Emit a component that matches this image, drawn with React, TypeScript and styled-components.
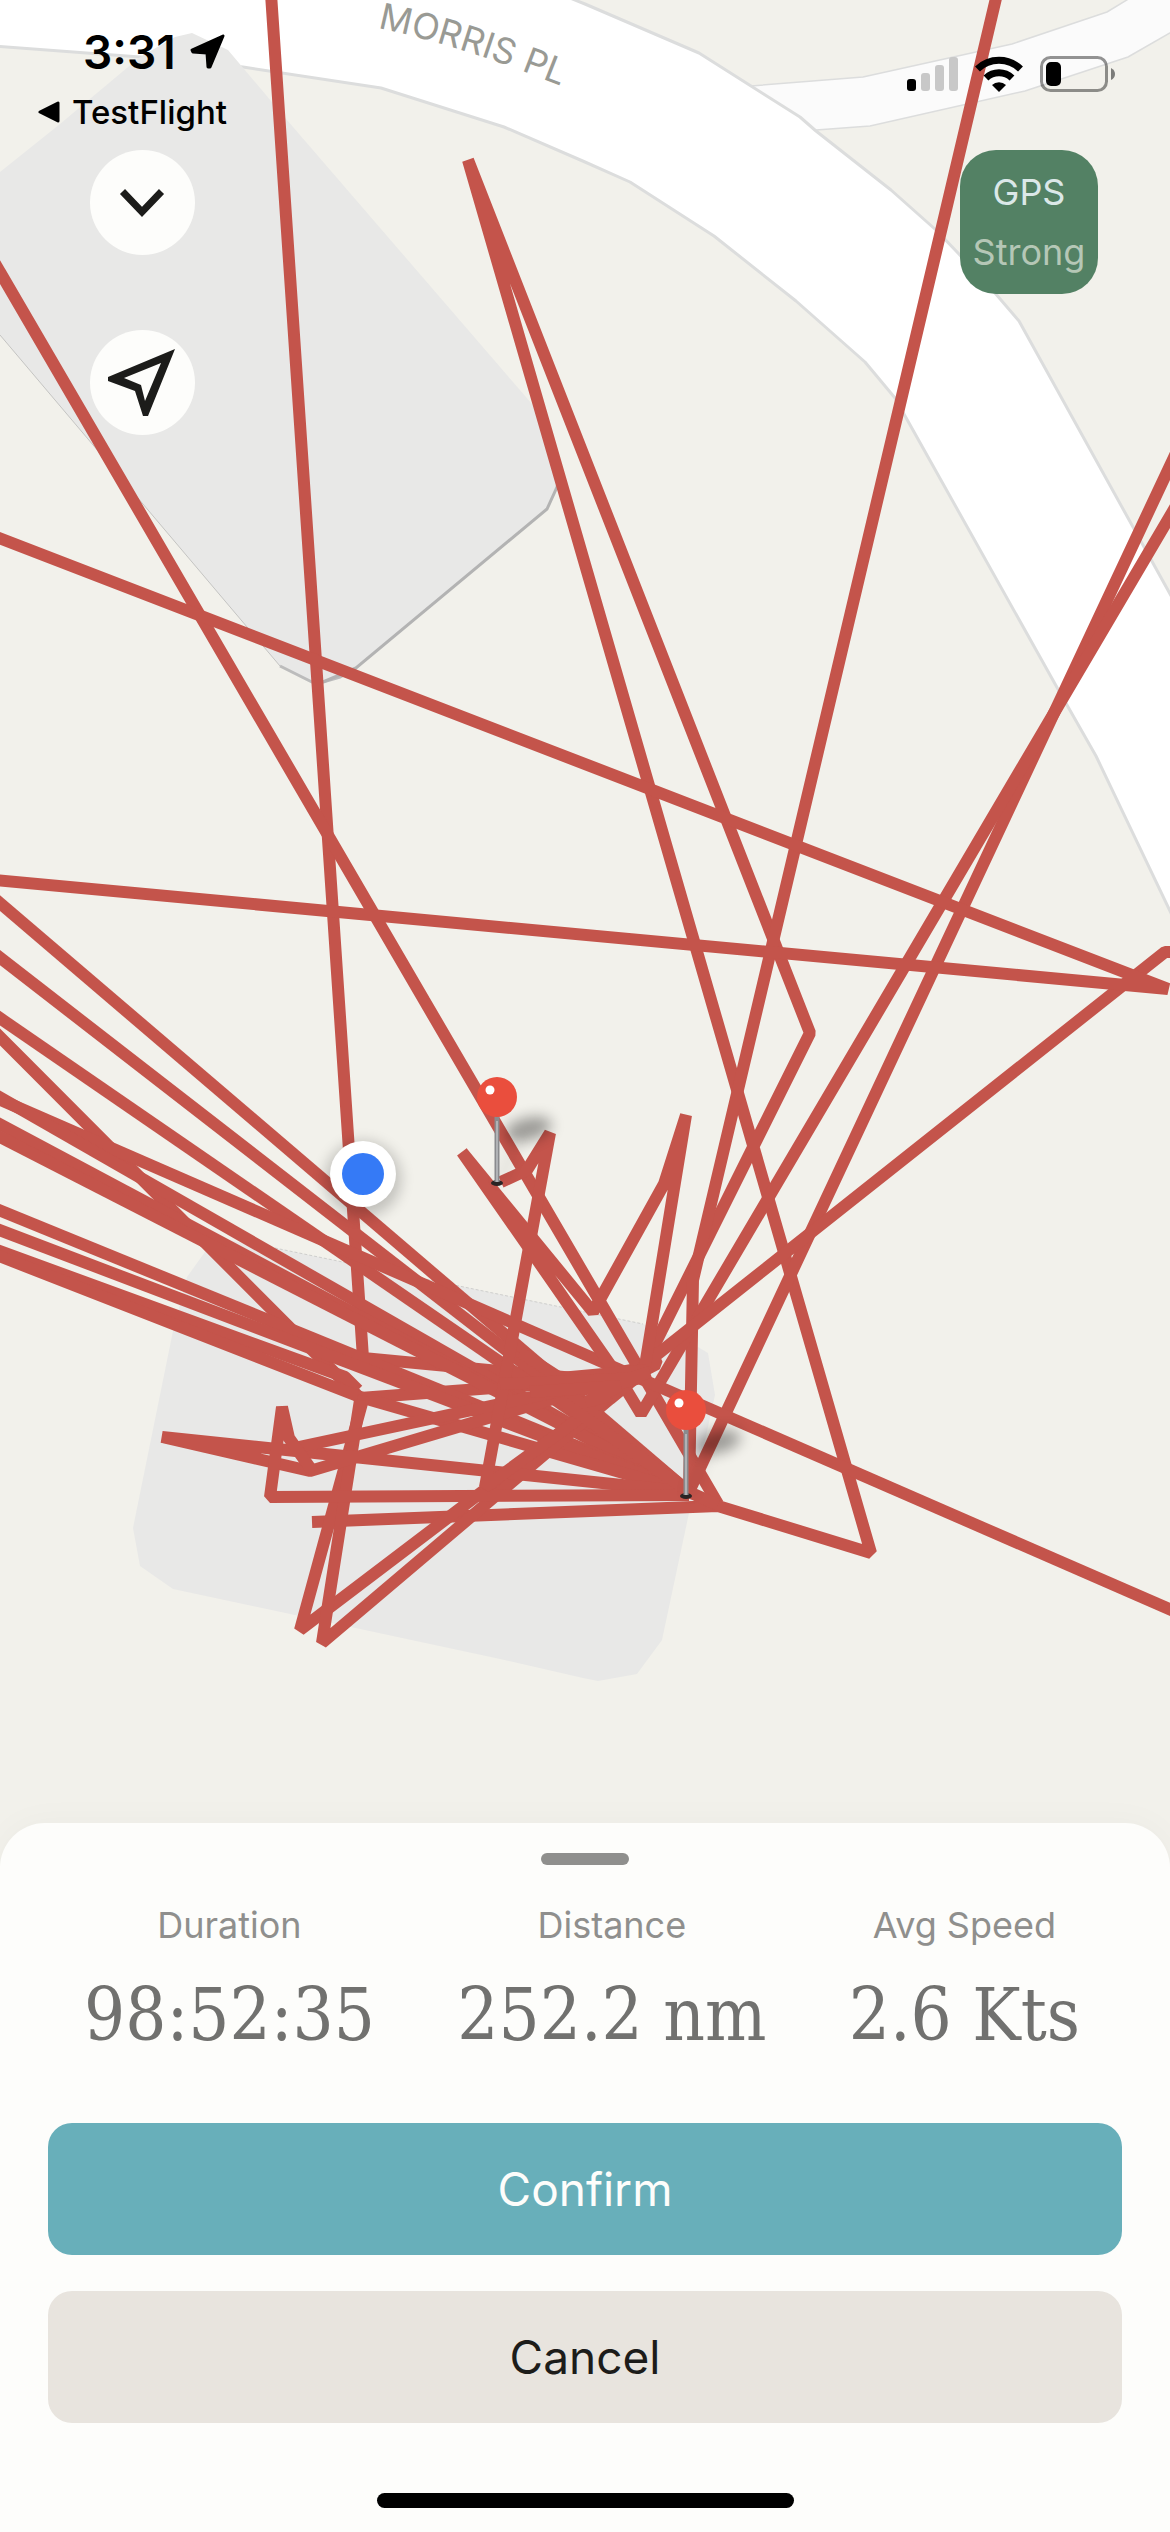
import React from 'react';
import styled, { createGlobalStyle } from 'styled-components';

const sans = "Inter, 'Noto Sans', 'Liberation Sans', sans-serif";
const serif = "'DejaVu Serif Condensed', 'DejaVu Serif', 'Liberation Serif', serif";

const GlobalStyle = createGlobalStyle`
  *, *::before, *::after { box-sizing: border-box; }
  body { margin: 0; background: #fdfdfb; font-family: ${sans}; }
  button { border: 0; padding: 0; font: inherit; cursor: pointer; }
`;

const Screen = styled.main`
  display: flex;
  flex-direction: column;
  min-height: 100vh;
`;

const MapArea = styled.section`
  position: relative;
  flex: 1;
  min-height: 600px;
  overflow: hidden;
  background: #f2f1eb;
`;

const MapCanvas = styled.svg`
  position: absolute;
  inset: 0;
  width: 100%;
  height: 100%;
`;

const Overlay = styled.div`
  position: relative;
`;

const StatusBar = styled.header`
  display: flex;
  justify-content: space-between;
  height: 150px;
  padding: 22px 55px 0 38px;
  color: #000;
`;

const StatusLeft = styled.div`
  display: flex;
  flex-direction: column;
  align-items: flex-start;
  gap: 12px;
`;

const Clock = styled.div`
  display: flex;
  align-items: center;
  gap: 14px;
  padding-left: 45px;
  font-size: 46px;
  font-weight: 600;
  line-height: 60px;
`;

const BackLink = styled.button`
  display: flex;
  align-items: center;
  gap: 11px;
  background: none;
  color: #000;
  font-size: 33px;
  font-weight: 500;
  line-height: 36px;
`;

const StatusIcons = styled.div`
  display: flex;
  align-items: center;
  gap: 17px;
  height: 104px;
`;

const Controls = styled.div`
  display: flex;
  justify-content: space-between;
  align-items: flex-start;
  padding: 0 72px 0 90px;
`;

const ControlStack = styled.div`
  display: flex;
  flex-direction: column;
  gap: 75px;
`;

const RoundButton = styled.button`
  display: block;
  width: 105px;
  height: 105px;
  border-radius: 50%;
  background: #fdfdfb;
  color: #1c1c1a;

  svg { display: block; }
`;

const GpsBadge = styled.div`
  display: flex;
  flex-direction: column;
  align-items: center;
  min-width: 138px;
  padding: 12px;
  border-radius: 36px;
  background: #538164;
`;

const BadgeLine = styled.span<{ $tone: string }>`
  color: ${(p) => p.$tone};
  font-size: 36px;
  line-height: 60px;
`;

const Sheet = styled.section`
  position: relative;
  display: flex;
  flex-direction: column;
  align-items: center;
  margin-top: -45px;
  padding: 30px 48px 24px;
  border-radius: 45px 45px 0 0;
  background: #fdfdfb;
  box-shadow: 0 0 36px rgba(0, 0, 0, 0.03);
`;

const Handle = styled.div`
  width: 88px;
  height: 12px;
  border-radius: 6px;
  background: #8f8f8d;
`;

const Stats = styled.dl`
  display: flex;
  align-self: stretch;
  justify-content: space-between;
  margin: 36px 0 60px;
  padding: 0 42px 0 36px;
`;

const Stat = styled.div`
  display: flex;
  flex-direction: column;
  align-items: center;
  gap: 18px;
`;

const StatLabel = styled.dt`
  color: #8f8f8d;
  font-size: 36px;
  line-height: 48px;
`;

const StatValue = styled.dd`
  margin: 0;
  color: #71716f;
  font-family: ${serif};
  font-stretch: condensed;
  font-size: 72px;
  line-height: 96px;
  white-space: nowrap;
`;

const Actions = styled.div`
  display: flex;
  flex-direction: column;
  align-self: stretch;
  gap: 36px;
`;

const ActionButton = styled.button<{ $primary?: boolean }>`
  height: 132px;
  border-radius: 24px;
  background: ${(p) => (p.$primary ? '#68afba' : '#e8e4de')};
  color: ${(p) => (p.$primary ? '#fdfdfb' : '#1c1c1a')};
  font-size: 46px;
  line-height: 60px;
`;

const HomeIndicator = styled.div`
  width: 417px;
  height: 15px;
  margin-top: 70px;
  border-radius: 8px;
  background: #000;
`;

const tracks = [
  'M271 -6L363 1358L585 1379L642 1368',
  'M-6 262L0 272L424 1000L718 1504',
  'M642 1370L810 1033L468 160L871 1553L718 1506L312 1522',
  'M997 -6L693 1280L689 1492',
  'M1176 453L700 1468L689 1492',
  'M1176 506L641 1414L618 1376',
  'M1176 952H1165L654 1357L657 1364L630 1378',
  'M-6 536L1168 989L-6 880',
  'M-6 898L689 1492',
  'M-6 953L689 1492',
  'M-6 1014L689 1492',
  'M-6 1031L360 1398L493 1388L630 1378',
  'M-6 1097L1176 1612',
  'M-6 1094L689 1492',
  'M-6 1121L689 1492',
  'M-6 1134L689 1490',
  'M-6 1208L689 1492',
  'M-6 1228L689 1492',
  'M-6 1249L345 1377L358 1390',
  'M-6 1254L360 1397L689 1492',
  'M364 1396L300 1630L640 1372',
  'M360 1400L322 1643L610 1399L650 1366',
  'M689 1492L162 1437L310 1471L640 1373',
  'M640 1374L294 1448',
  'M689 1495L270 1497L282 1407L289 1438L313 1472',
  'M501 1182L527 1170L550 1133L485 1487L610 1396',
  'M618 1376L462 1152L593 1312L664 1184L686 1115L645 1366',
  'M520 1352L560 1378L648 1370L560 1386L689 1492',
  'M500 1384L640 1378L590 1392L650 1372',
  'M530 1392L620 1386L586 1402L610 1396',
  'M560 1400L689 1492L718 1505',
];

const Pin = ({ x, y }: { x: number; y: number }) => (
  <g transform={`translate(${x} ${y})`}>
    <ellipse cx="31" cy="-54" rx="24" ry="11" transform="rotate(-14 31 -54)" fill="#000" opacity="0.36" filter="url(#soft)" />
    <path d="M2 0L22 -46" stroke="#000" strokeWidth="8" opacity="0.08" filter="url(#soft)" />
    <ellipse cy="0" rx="6" ry="3" fill="#2a2424" />
    <path d="M0 -68V-1" stroke="#8a8b8e" strokeWidth="5" />
    <path d="M0 -62V-1" stroke="#b0b2b5" strokeWidth="2" />
    <circle cy="-86" r="20" fill="#ea4e3d" />
    <circle cx="-7" cy="-93" r="4.5" fill="#fff" />
  </g>
);

const RouteMap = () => (
  <MapCanvas viewBox="0 0 1170 1868" preserveAspectRatio="xMidYMin slice" role="img" aria-label="Recorded track">
    <defs>
      <filter id="soft" x="-60%" y="-100%" width="220%" height="300%">
        <feGaussianBlur stdDeviation="7" />
      </filter>
      <path id="street" d="M378 28Q470 47 590 98" />
    </defs>
    <g stroke="#dcdddd" strokeLinejoin="round">
      <path
        d="M740 86L751 86L863 77L1012 44L1107 12L1135 -5H1180V27L1128 57L1025 91L870 126L816 130L780 132Z"
        fill="#fbfbfb"
        strokeWidth="1.5"
      />
      <path
        d="M-5 46L140 57L243 67L381 88L504 127L585 162L630 182L714 236L796 301L865 362L895 398L1059 691L1096 756L1180 932V612L1133 527L1019 321L995 293L958 253L936 230L891 190L816 131L800 117L751 86L699 53L585 4L560 -6H-5Z"
        fill="#fff"
        strokeWidth="3"
      />
    </g>
    <path
      d="M0 172L60 124L140 57L175 37L192 33L228 50L287 120L532 404L560 470L556 488L547 508L356 668L340 677L323 682L312 683L280 666L0 335Z"
      fill="#e8e8e7"
    />
    <path d="M0 335L280 666" stroke="#c4c4c2" fill="none" />
    <path d="M280 666L312 682L323 682L340 677L356 668" stroke="#bcbcbc" strokeWidth="3" fill="none" />
    <path d="M323 682L356 668L547 509L557 487L561 468" stroke="#b3b3b3" strokeWidth="3" fill="none" />
    <path
      d="M215 1238L280 1249L643 1324L698 1347L708 1353L715 1395L689 1513L662 1640L637 1674L598 1681L583 1678L500 1659L173 1589L140 1566L133 1528L173 1331L187 1277Z"
      fill="#e8e8e7"
    />
    <path d="M270 1247L643 1324" stroke="#cfcfcd" strokeDasharray="3 2" />
    <text fill="#999a94" fontFamily={sans} fontSize="36">
      <textPath href="#street">MORRIS PL</textPath>
    </text>
    <g stroke="#c4544b" strokeWidth="12" strokeLinejoin="bevel" fill="none">
      {tracks.map((d) => (
        <path key={d} d={d} />
      ))}
    </g>
    <circle cx="363" cy="1179" r="38" fill="#000" opacity="0.2" filter="url(#soft)" />
    <circle cx="363" cy="1174" r="33" fill="#fff" />
    <circle cx="363" cy="1174" r="21" fill="#357af6" />
    <Pin x={497} y={1183} />
    <Pin x={686} y={1496} />
  </MapCanvas>
);

const LocationArrow = () => (
  <svg width="36" height="36" viewBox="0 0 36 36" aria-hidden="true">
    <path d="M33 2L2 16L3 18L17 19L18 33L20 33Z" fill="#000" stroke="#000" strokeWidth="3" strokeLinejoin="round" />
  </svg>
);

const BackTriangle = () => (
  <svg width="23" height="24" viewBox="0 0 23 24" aria-hidden="true">
    <path d="M2 12L20 3V21Z" fill="#000" stroke="#000" strokeWidth="3" strokeLinejoin="round" />
  </svg>
);

const Signal = () => (
  <svg width="51" height="36" viewBox="0 0 51 36" role="img" aria-label="Signal">
    <rect y="23" width="9" height="12" rx="3" fill="#000" />
    <g fill="#c8c8c8">
      <rect x="14" y="17" width="9" height="18" rx="3" />
      <rect x="28" y="9" width="9" height="26" rx="3" />
      <rect x="42" y="1" width="9" height="34" rx="3" />
    </g>
  </svg>
);

const Wifi = () => (
  <svg width="48" height="36" viewBox="0 0 48 36" role="img" aria-label="Wi-Fi">
    <g fill="none" stroke="#000" strokeWidth="7">
      <path d="M2.500 13A31 31 0 0 1 45.500 13" />
      <path d="M11 22A19 19 0 0 1 37 22" />
    </g>
    <path d="M24 36L17 29A10 10 0 0 1 31 29Z" fill="#000" />
  </svg>
);

const Battery = () => (
  <svg width="75" height="36" viewBox="0 0 75 36" role="img" aria-label="Battery">
    <rect x="1.500" y="1.500" width="65" height="33" rx="9" fill="none" stroke="#000" strokeOpacity="0.42" strokeWidth="3" />
    <rect x="6" y="6" width="15" height="24" rx="5" fill="#000" />
    <path d="M71 12Q75 14 75 18Q75 22 71 24Z" fill="#7c7c7a" />
  </svg>
);

const ChevronIcon = () => (
  <svg width="105" height="105" viewBox="0 0 105 105" aria-hidden="true">
    <path d="M32.500 41.500L52 62L71.500 41.500" fill="none" stroke="currentColor" strokeWidth="7" />
  </svg>
);

const NavigateIcon = () => (
  <svg width="105" height="105" viewBox="0 0 105 105" aria-hidden="true">
    <path
      d="M85 19L18 47V51L45 61L53 86H58ZM71 33L55 71L51 55L34 48Z"
      fill="currentColor"
      fillRule="evenodd"
    />
  </svg>
);

const stats = [
  { label: 'Duration', value: '98:52:35' },
  { label: 'Distance', value: '252.2 nm' },
  { label: 'Avg Speed', value: '2.6 Kts' },
];

export default function App() {
  return (
    <Screen>
      <GlobalStyle />
      <MapArea>
        <RouteMap />
        <Overlay>
          <StatusBar>
            <StatusLeft>
              <Clock>
                3:31
                <LocationArrow />
              </Clock>
              <BackLink type="button">
                <BackTriangle />
                TestFlight
              </BackLink>
            </StatusLeft>
            <StatusIcons>
              <Signal />
              <Wifi />
              <Battery />
            </StatusIcons>
          </StatusBar>
          <Controls>
            <ControlStack>
              <RoundButton type="button" aria-label="Collapse">
                <ChevronIcon />
              </RoundButton>
              <RoundButton type="button" aria-label="Center on my location">
                <NavigateIcon />
              </RoundButton>
            </ControlStack>
            <GpsBadge>
              <BadgeLine $tone="#dbe8e8">GPS</BadgeLine>
              <BadgeLine $tone="#b5c7b6">Strong</BadgeLine>
            </GpsBadge>
          </Controls>
        </Overlay>
      </MapArea>
      <Sheet>
        <Handle />
        <Stats>
          {stats.map((s) => (
            <Stat key={s.label}>
              <StatLabel>{s.label}</StatLabel>
              <StatValue>{s.value}</StatValue>
            </Stat>
          ))}
        </Stats>
        <Actions>
          <ActionButton type="button" $primary>
            Confirm
          </ActionButton>
          <ActionButton type="button">Cancel</ActionButton>
        </Actions>
        <HomeIndicator />
      </Sheet>
    </Screen>
  );
}
